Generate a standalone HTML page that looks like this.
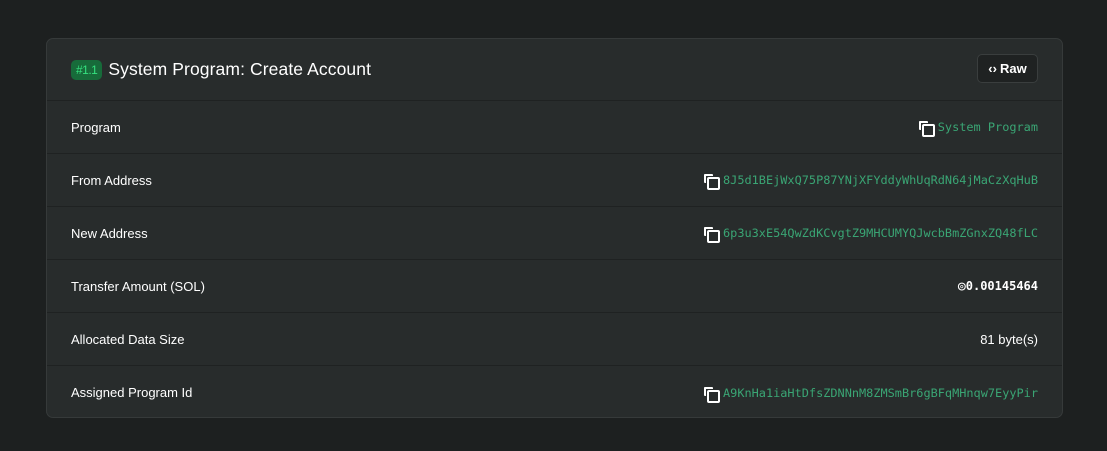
<!DOCTYPE html>
<html><head><style>
*{margin:0;padding:0;box-sizing:border-box}
body{width:1107px;height:451px;background:#1d2020;font-family:"Liberation Sans",sans-serif;color:#fff;overflow:hidden}
.card{position:absolute;left:46px;top:38px;width:1017px;height:380px;background:#282c2c;border:1px solid #363a3a;border-radius:7px}
.hdr{height:62px;border-bottom:1px solid #1f2222;display:flex;align-items:center;padding:0 24px}
.badge{background:#176b3a;color:#35e07f;font-size:12px;padding:3px 5px;border-radius:5px;letter-spacing:-0.5px;margin-right:6px}
.title{font-size:17.5px;letter-spacing:0.1px}
.raw{position:absolute;right:24px;top:15px;width:61px;height:29px;border:1px solid #3a3e3e;background:#1f2222;border-radius:5px;font-size:13px;font-weight:bold;display:flex;align-items:center;justify-content:center;gap:3px}
.row{height:53px;border-bottom:1px solid #1f2222;display:flex;align-items:center;justify-content:space-between;padding:0 24px 0 24px;font-size:13px}
.row:last-child{border-bottom:none}
.m{font-family:"DejaVu Sans Mono","Liberation Mono",monospace;font-size:11.9px;color:#3aa574;display:flex;align-items:center}
.cp{width:12px;height:12px;position:relative;margin-right:7px}
.cp:before{content:"";position:absolute;left:0;top:0;width:7px;height:7px;border:2px solid #fff;border-radius:1px;border-right:none;border-bottom:none}
.cp:after{content:"";position:absolute;left:3px;top:3px;width:9px;height:9px;border:2px solid #fff;border-radius:2px}
.w{font-family:"DejaVu Sans Mono",monospace;font-size:12px;color:#fff;font-weight:bold}
</style></head><body>
<div class="card">
<div class="hdr"><span class="badge">#1.1</span><span class="title">System Program: Create Account</span>
<div class="raw"><span style="font-size:13px">‹›</span>Raw</div></div>
<div class="row"><span>Program</span><span class="m"><span class="cp"></span>System Program</span></div>
<div class="row"><span>From Address</span><span class="m"><span class="cp"></span>8J5d1BEjWxQ75P87YNjXFYddyWhUqRdN64jMaCzXqHuB</span></div>
<div class="row"><span>New Address</span><span class="m"><span class="cp"></span>6p3u3xE54QwZdKCvgtZ9MHCUMYQJwcbBmZGnxZQ48fLC</span></div>
<div class="row"><span>Transfer Amount (SOL)</span><span class="w"><span style="font-size:13px">◎</span>0.00145464</span></div>
<div class="row"><span>Allocated Data Size</span><span>81 byte(s)</span></div>
<div class="row"><span>Assigned Program Id</span><span class="m"><span class="cp"></span>A9KnHa1iaHtDfsZDNNnM8ZMSmBr6gBFqMHnqw7EyyPir</span></div>
</div>
</body></html>
